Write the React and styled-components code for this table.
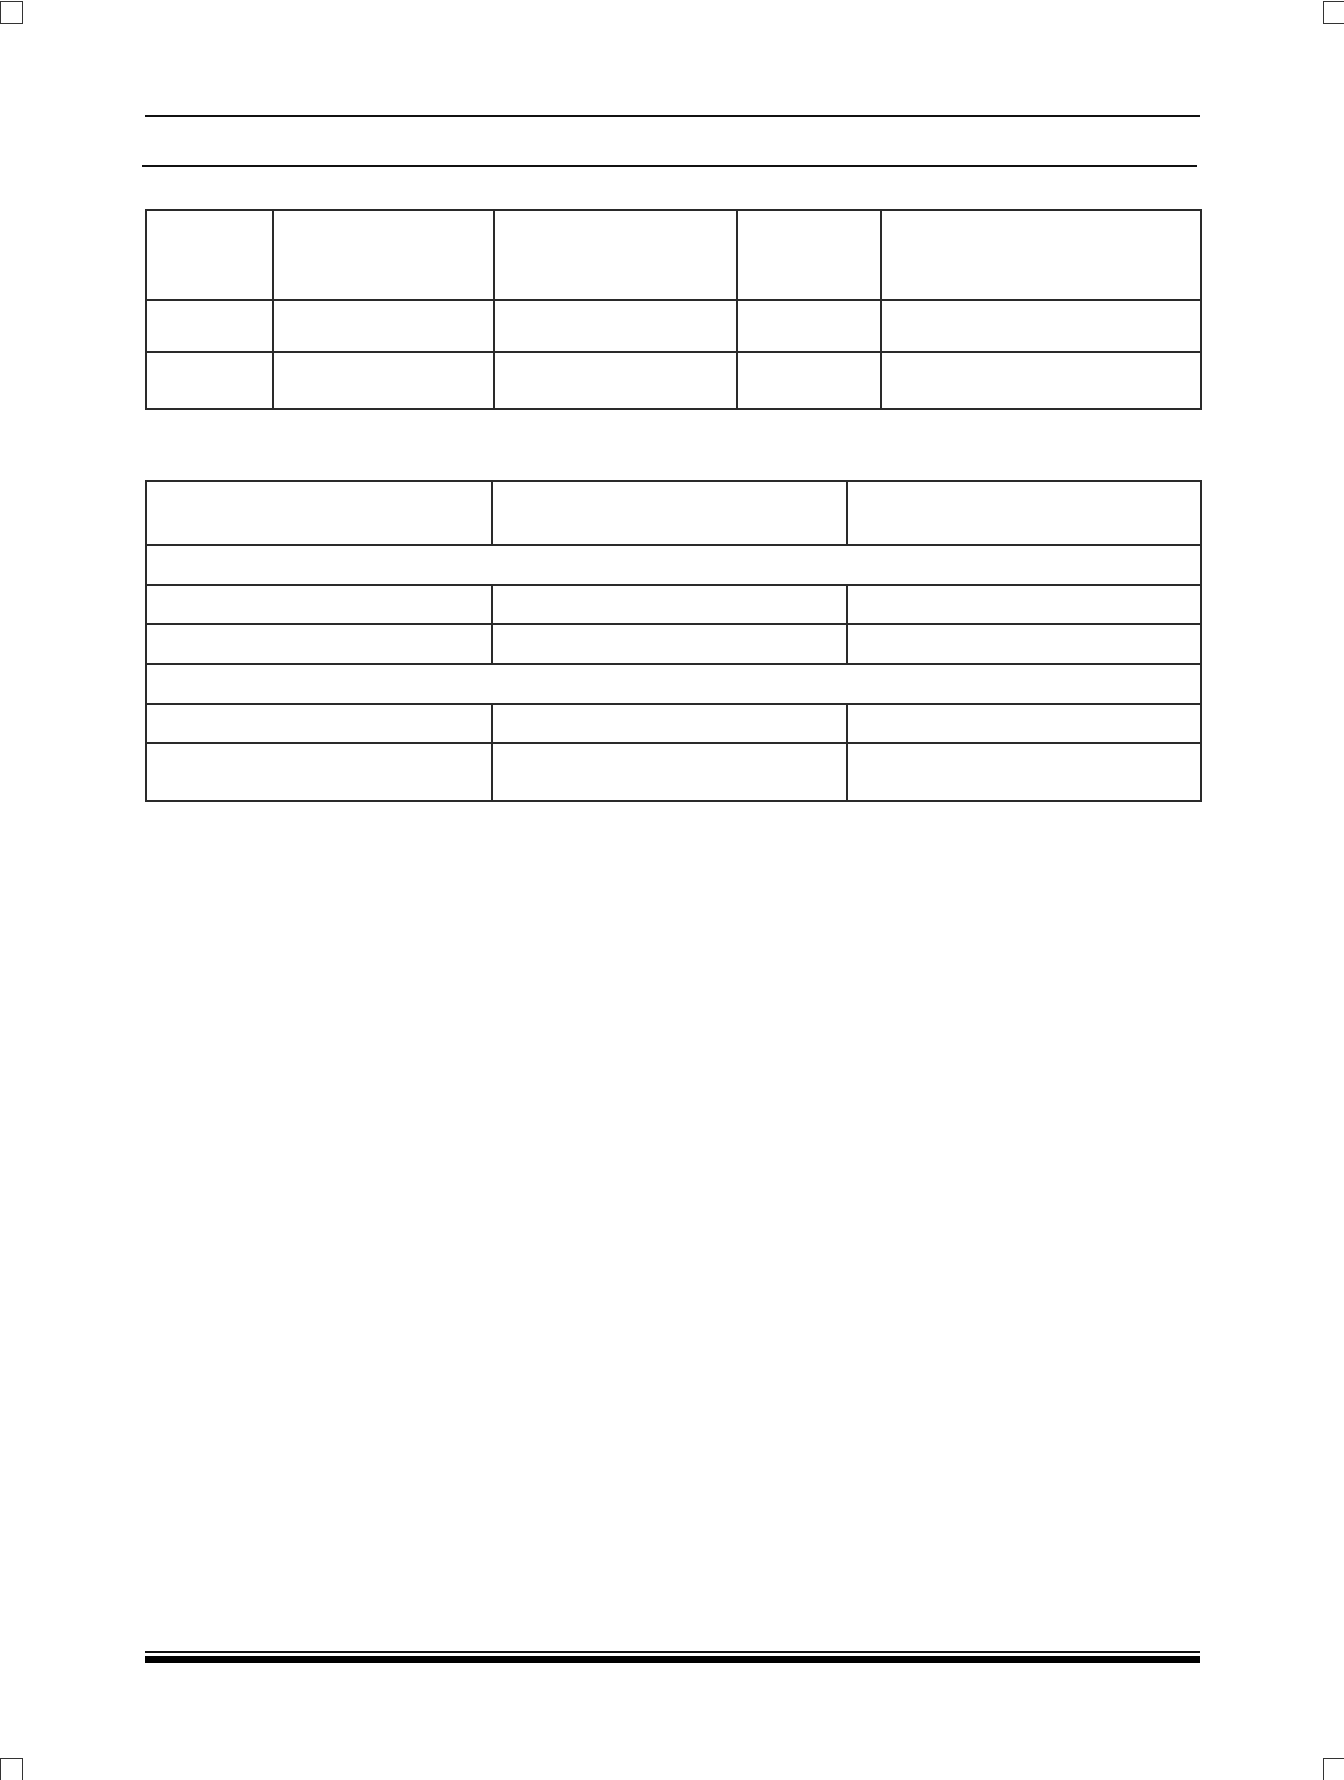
import React from "react";
import styled, { createGlobalStyle } from "styled-components";

const GlobalStyle = createGlobalStyle`
  html, body {
    margin: 0;
    padding: 0;
    background: #fff;
    font-family: "Liberation Sans", Arial, sans-serif;
  }
`;

const Page = styled.div`
  position: relative;
  width: 1344px;
  min-height: 1780px;
  box-sizing: border-box;
  padding: 115px 144px 117px 145px;
  display: flex;
  flex-direction: column;
  overflow: hidden;
  background: #fff;
`;

const CropMark = styled.span`
  position: absolute;
  width: 21px;
  height: 21px;
  border: 1px solid #333;
  left: ${(p) => (p.right ? "1323px" : "0")};
  top: ${(p) => (p.bottom ? "1758px" : "1px")};
`;

const Rule = styled.hr`
  margin: ${(p) => p.top}px 0 0 ${(p) => -p.shift || 0}px;
  width: 1055px;
  height: 0;
  border: none;
  border-top: 2px solid #111;
`;

const Table = styled.table`
  margin-top: ${(p) => p.top}px;
  width: 1055px;
  border-collapse: collapse;
  table-layout: fixed;
  td {
    border: 2px solid #2a2a2a;
    padding: 0;
  }
`;

const Row = styled.tr`
  height: ${(p) => p.h}px;
`;

const Footer = styled.div`
  margin-top: auto;
  width: 1055px;
  display: flex;
  flex-direction: column;
  gap: 3px;
`;

const ThinBar = styled.div`
  height: 2px;
  background: #111;
`;

const ThickBar = styled.div`
  height: 7px;
  background: #000;
`;

const firstCols = [127, 221, 243, 144, 320];
const secondCols = [346, 355, 354];

function Cells({ n }) {
  return Array.from({ length: n }, (_, i) => <td key={i} />);
}

export default function App() {
  return (
    <>
      <GlobalStyle />
      <Page>
        <CropMark />
        <CropMark right />
        <CropMark bottom />
        <CropMark right bottom />

        <Rule top={0} />
        <Rule top={48} shift={3} />

        <Table top={42}>
          <colgroup>
            {firstCols.map((w, i) => (
              <col key={i} style={{ width: w }} />
            ))}
          </colgroup>
          <tbody>
            <Row h={90}><Cells n={5} /></Row>
            <Row h={52}><Cells n={5} /></Row>
            <Row h={57}><Cells n={5} /></Row>
          </tbody>
        </Table>

        <Table top={70}>
          <colgroup>
            {secondCols.map((w, i) => (
              <col key={i} style={{ width: w }} />
            ))}
          </colgroup>
          <tbody>
            <Row h={64}><Cells n={3} /></Row>
            <Row h={40}><td colSpan={3} /></Row>
            <Row h={39}><Cells n={3} /></Row>
            <Row h={40}><Cells n={3} /></Row>
            <Row h={40}><td colSpan={3} /></Row>
            <Row h={39}><Cells n={3} /></Row>
            <Row h={58}><Cells n={3} /></Row>
          </tbody>
        </Table>

        <Footer>
          <ThinBar />
          <ThickBar />
        </Footer>
      </Page>
    </>
  );
}
